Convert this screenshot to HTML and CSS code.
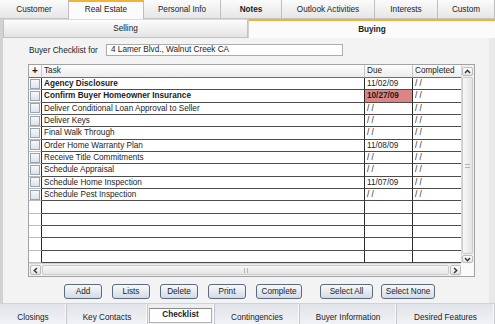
FILE: index.html
```html
<!DOCTYPE html>
<html lang="en">
<head>
    <meta charset="UTF-8">
    <title>Real Estate - Buying Checklist</title>
    <link rel="stylesheet" href="styles.css">
</head>
<body>
    <div class="app">
      <nav class="top-tabs">
        <div class="tab">Customer</div>
        <div class="tab active">Real Estate</div>
        <div class="tab">Personal Info</div>
        <div class="tab bold">Notes</div>
        <div class="tab">Outlook Activities</div>
        <div class="tab">Interests</div>
        <div class="tab">Custom</div>
      </nav>

      <div class="panel">
        <div class="sub-tabs">
          <div class="sub-tab">Selling</div>
          <div class="sub-tab active">Buying</div>
        </div>

        <div class="content">
          <div class="for-row">
            <label class="for-label">Buyer Checklist for</label>
            <div class="field">4 Lamer Blvd., Walnut Creek CA</div>
          </div>

          <div class="grid">
            <div class="grid-body">
              <div class="row head">
                <div class="cell chk plus">+</div>
                <div class="cell">Task</div>
                <div class="cell">Due</div>
                <div class="cell">Completed</div>
              </div>
              <div class="row">
                <div class="cell chk"><span class="box"></span></div>
                <div class="cell b">Agency Disclosure</div>
                <div class="cell">11/02/09</div>
                <div class="cell">/ /</div>
              </div>
              <div class="row">
                <div class="cell chk"><span class="box"></span></div>
                <div class="cell b">Confirm Buyer Homeowner Insurance</div>
                <div class="cell b late">10/27/09</div>
                <div class="cell">/ /</div>
              </div>
              <div class="row">
                <div class="cell chk"><span class="box"></span></div>
                <div class="cell">Deliver Conditional Loan Approval to Seller</div>
                <div class="cell">/ /</div>
                <div class="cell">/ /</div>
              </div>
              <div class="row">
                <div class="cell chk"><span class="box"></span></div>
                <div class="cell">Deliver Keys</div>
                <div class="cell">/ /</div>
                <div class="cell">/ /</div>
              </div>
              <div class="row">
                <div class="cell chk"><span class="box"></span></div>
                <div class="cell">Final Walk Through</div>
                <div class="cell">/ /</div>
                <div class="cell">/ /</div>
              </div>
              <div class="row">
                <div class="cell chk"><span class="box"></span></div>
                <div class="cell">Order Home Warranty Plan</div>
                <div class="cell">11/08/09</div>
                <div class="cell">/ /</div>
              </div>
              <div class="row">
                <div class="cell chk"><span class="box"></span></div>
                <div class="cell">Receive Title Commitments</div>
                <div class="cell">/ /</div>
                <div class="cell">/ /</div>
              </div>
              <div class="row">
                <div class="cell chk"><span class="box"></span></div>
                <div class="cell">Schedule Appraisal</div>
                <div class="cell">/ /</div>
                <div class="cell">/ /</div>
              </div>
              <div class="row">
                <div class="cell chk"><span class="box"></span></div>
                <div class="cell">Schedule Home Inspection</div>
                <div class="cell">11/07/09</div>
                <div class="cell">/ /</div>
              </div>
              <div class="row">
                <div class="cell chk"><span class="box"></span></div>
                <div class="cell">Schedule Pest Inspection</div>
                <div class="cell">/ /</div>
                <div class="cell">/ /</div>
              </div>
              <div class="row"><div class="cell chk"></div><div class="cell"></div><div class="cell"></div><div class="cell"></div></div>
              <div class="row"><div class="cell chk"></div><div class="cell"></div><div class="cell"></div><div class="cell"></div></div>
              <div class="row"><div class="cell chk"></div><div class="cell"></div><div class="cell"></div><div class="cell"></div></div>
              <div class="row"><div class="cell chk"></div><div class="cell"></div><div class="cell"></div><div class="cell"></div></div>
              <div class="row"><div class="cell chk"></div><div class="cell"></div><div class="cell"></div><div class="cell"></div></div>
            </div>

            <div class="vscroll">
              <div class="sbtn up">
                <svg width="7" height="5" viewBox="0 0 7 5"><path d="M1 4 L3.5 1.3 L6 4" stroke="#333" stroke-width="1.4" fill="none"/></svg>
              </div>
              <div class="thumb v"><span class="grip"></span></div>
              <div class="sbtn down">
                <svg width="7" height="5" viewBox="0 0 7 5"><path d="M1 1 L3.5 3.7 L6 1" stroke="#333" stroke-width="1.4" fill="none"/></svg>
              </div>
            </div>

            <div class="hscroll">
              <div class="sbtn left">
                <svg width="5" height="7" viewBox="0 0 5 7"><path d="M4 1 L1.3 3.5 L4 6" stroke="#333" stroke-width="1.4" fill="none"/></svg>
              </div>
              <div class="thumb h"><span class="grip"></span></div>
              <div class="sbtn right">
                <svg width="5" height="7" viewBox="0 0 5 7"><path d="M1 1 L3.7 3.5 L1 6" stroke="#333" stroke-width="1.4" fill="none"/></svg>
              </div>
            </div>
            <div class="corner"></div>
          </div>

          <div class="buttons">
            <button class="btn">Add</button>
            <button class="btn">Lists</button>
            <button class="btn">Delete</button>
            <button class="btn">Print</button>
            <button class="btn">Complete</button>
            <button class="btn">Select All</button>
            <button class="btn">Select None</button>
          </div>
        </div>
      </div>

      <nav class="bottom-tabs">
        <div class="btab">Closings</div>
        <div class="btab">Key Contacts</div>
        <div class="btab active"><span>Checklist</span></div>
        <div class="btab">Contingencies</div>
        <div class="btab">Buyer Information</div>
        <div class="btab">Desired Features</div>
      </nav>
    </div>
</body>
</html>
```

FILE: styles.css
```css
* {
  margin: 0;
  padding: 0;
  box-sizing: border-box;
}
body {
  background-color: #d2d2d2;
  font-family: "Liberation Sans", Arial, sans-serif;
  font-size: 8.2px;
  color: #1c1c1c;
}
.app {
  width: 495px;
  height: 324px;
  overflow: hidden;
}

/* top tab strip */
.top-tabs {
  display: grid;
  grid-template-columns: 69px 75px 77px 61px 93px 63px 57px;
  height: 19px;
  background-color: #e4e4e4;
}
.tab {
  display: flex;
  align-items: center;
  justify-content: center;
  background: linear-gradient(#fbfbfb, #e6e6e6);
  border-right: 1px solid #bdbdbd;
  border-bottom: 1px solid #c4c4c4;
  white-space: nowrap;
}
.tab.active {
  background: #fbfbfb;
  border-top: 2px solid #f2b238;
  border-bottom: none;
  padding-bottom: 3px;
}
.tab.bold {
  font-weight: bold;
}

/* panel */
.panel {
  margin-left: 3px;
  width: 492px;
  height: 284px;
  background-color: #f3f3f3;
}
.sub-tabs {
  display: grid;
  grid-template-columns: 245px 247px;
  height: 19px;
}
.sub-tab {
  display: flex;
  align-items: center;
  justify-content: center;
  background: linear-gradient(#fcfcfc, #e4e4e4);
  border: 1px solid #c2c2c2;
  border-top-color: #dadada;
}
.sub-tab.active {
  background: #fbfbfb;
  font-weight: bold;
  border: none;
  border-top: 2px solid #f2b238;
  border-left: 1px solid #d0d0d0;
}
.content {
  height: 265px;
  padding: 6px 0 0 25px;
  border-right: 6px solid #e9e9e9;
}
.for-row {
  display: flex;
  align-items: center;
  height: 12px;
}
.for-label {
  width: 78px;
  padding-left: 1px;
}
.field {
  width: 237px;
  height: 12px;
  line-height: 10px;
  padding-left: 4px;
  background-color: #fff;
  border: 1px solid #acacac;
}

/* task grid */
.grid {
  display: grid;
  grid-template-columns: 432px 13px;
  grid-template-rows: 198px 13px;
  width: 447px;
  height: 213px;
  margin-top: 8px;
  border: 1px solid #a2a2a2;
  background-color: #fff;
}
.grid-body {
  overflow: hidden;
}
.row {
  display: grid;
  grid-template-columns: 13px 323px 48px 48px;
  height: 12.333px;
}
.cell {
  border-right: 1px solid #2a2a2a;
  border-bottom: 1px solid #4c4c4c;
  padding-left: 2px;
  line-height: 11px;
  white-space: nowrap;
  overflow: hidden;
}
.cell:last-child {
  border-right: none;
}
.cell.b {
  font-weight: bold;
}
.cell.late {
  background-color: #dc8585;
}
.cell.chk {
  display: flex;
  align-items: center;
  justify-content: center;
  padding-left: 0;
  border-bottom-color: #bcbcbc;
}
.box {
  width: 10px;
  height: 10px;
  border: 1px solid #97a6b6;
  background: linear-gradient(#f6f8fa, #dde3ea);
}
.row.head {
  height: 13px;
  background: linear-gradient(#fdfdfd, #ebebeb);
}
.row.head .cell {
  border-right-color: #c6c6c6;
  border-bottom-color: #6c6c6c;
  line-height: 12px;
}
.row.head .cell:first-child {
  border-right-color: #c6c6c6;
}
.plus {
  font-size: 10px;
  font-weight: bold;
}

/* scroll bars */
.vscroll {
  display: flex;
  flex-direction: column;
  background-color: #efefef;
  border-left: 1px solid #d6d6d6;
  padding: 2px 1px 0 0;
}
.hscroll {
  display: flex;
  background-color: #efefef;
  border-top: 1px solid #d6d6d6;
  padding: 1px 0 1px 1px;
}
.corner {
  background-color: #fafafa;
}
.sbtn {
  display: flex;
  align-items: center;
  justify-content: center;
  background: linear-gradient(#fdfdfd, #e3e3e3);
  border: 1px solid #bcbcbc;
  border-radius: 2px;
}
.sbtn.up {
  height: 9px;
}
.sbtn.down {
  height: 8px;
  margin-top: 1px;
}
.sbtn.left,
.sbtn.right {
  width: 11px;
}
.thumb {
  flex: 1;
  display: flex;
  align-items: center;
  justify-content: center;
  border: 1px solid #cbcbcb;
  border-radius: 2px;
}
.thumb.v {
  margin-top: 1px;
  background: linear-gradient(to right, #f8f8f8, #e4e4e4);
}
.thumb.h {
  margin: 0 1px;
  background: linear-gradient(#f8f8f8, #e6e6e6);
}
.grip {
  width: 5px;
  height: 4px;
  border-top: 1px solid #b4b4b4;
  border-bottom: 1px solid #b4b4b4;
}
.thumb.h .grip {
  width: 4px;
  height: 5px;
  border: none;
  border-left: 1px solid #b4b4b4;
  border-right: 1px solid #b4b4b4;
}

/* buttons */
.buttons {
  display: flex;
  gap: 10px;
  margin: 7px 0 0 36px;
}
.btn {
  width: 38px;
  height: 15px;
  font-family: inherit;
  font-size: 8.2px;
  color: #1c1c1c;
  background: linear-gradient(#f7f9fb, #d3dbe5);
  border: 1px solid #5a6b7e;
  border-radius: 3px;
}
.btn:nth-child(5) {
  width: 46px;
}
.btn:nth-child(6) {
  width: 53px;
  margin-left: 8px;
}
.btn:nth-child(7) {
  width: 54px;
  margin-left: -2px;
}

/* bottom tab strip */
.bottom-tabs {
  display: grid;
  grid-template-columns: 67px 81px 67px 85px 97px 98px;
  height: 21px;
  background-color: #dfe1e6;
  border-top: 1px solid #cfd2d8;
}
.btab {
  display: flex;
  align-items: flex-end;
  justify-content: center;
  padding-bottom: 2px;
  background: linear-gradient(#e0e3e9, #f1f2f5);
  border-right: 1px solid #c3c7cf;
  box-shadow: inset -1px 0 0 #fafafa;
  white-space: nowrap;
}
.btab.active {
  align-items: flex-start;
  padding: 4px 2px 1px 1px;
  background: #eceef2;
}
.btab.active span {
  display: flex;
  align-items: center;
  justify-content: center;
  width: 100%;
  height: 15px;
  padding-bottom: 3px;
  font-weight: bold;
  background-color: #fff;
  border: 1px solid #b2b2b2;
  border-top-color: #8c8c8c;
}
```
